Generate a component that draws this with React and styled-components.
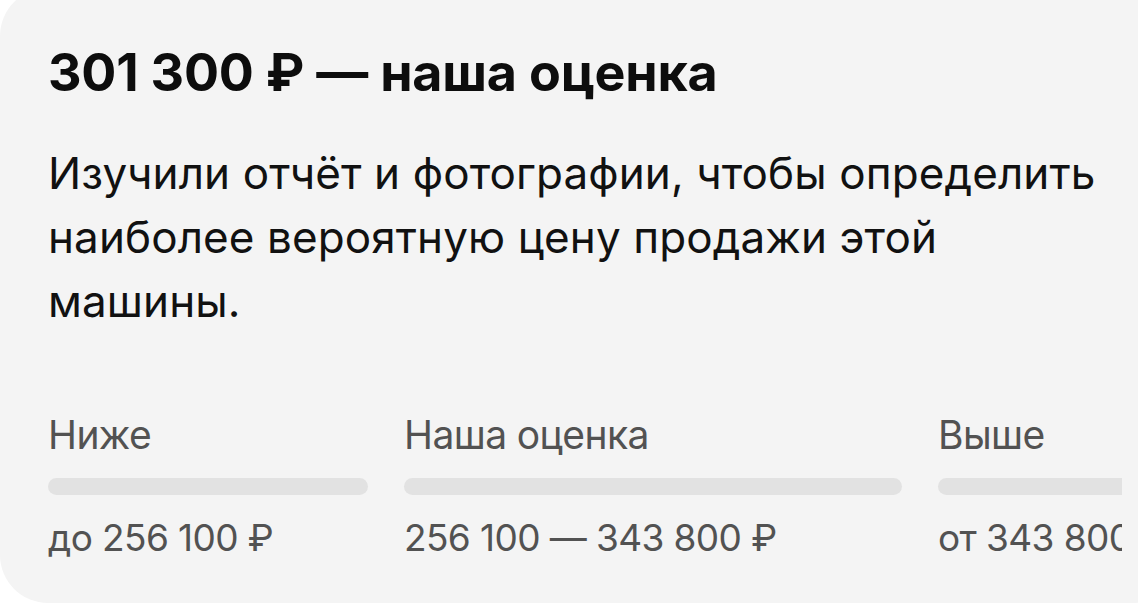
import * as React from 'react'
import styled, { createGlobalStyle } from 'styled-components'

const GlobalStyle = createGlobalStyle`
    html, body {
        margin: 0;
        padding: 0;
        background: #ffffff;
    }
    body {
        font-family: Inter, "Noto Sans", Roboto, sans-serif;
        -webkit-font-smoothing: antialiased;
    }
`

const Card = styled.section`
    margin-top: -12px;
    width: 1180px;
    height: 615px;
    box-sizing: border-box;
    background: #f4f4f4;
    border-radius: 48px;
    padding: 54px 0 0 48px;
    overflow: hidden;
`

const Title = styled.h2`
    margin: 0;
    font-size: 52px;
    line-height: 62px;
    font-weight: 700;
    color: #0d0d0d;
    letter-spacing: -0.2px;
    white-space: nowrap;
`

const Description = styled.p`
    margin: 37px 0 0;
    width: 1074px;
    font-size: 44px;
    line-height: 64px;
    font-weight: 400;
    color: #111111;
    letter-spacing: 0.1px;
`

// horizontal strip of price ranges, cut at the right edge like a scroller
const Scale = styled.div`
    margin-top: 78px;
    width: 1074px;
    overflow: hidden;
    display: flex;
    gap: 36px;
`

const Segment = styled.div`
    flex: 0 0 ${props => props.width}px;
    display: flex;
    flex-direction: column;
    color: #525252;
    white-space: nowrap;
`

const Label = styled.div`
    font-size: 39px;
    line-height: 48px;
    letter-spacing: -0.6px;
`

const Bar = styled.div`
    margin-top: 19px;
    height: 17px;
    border-radius: 9px;
    background: #e2e2e2;
`

const Value = styled.div`
    margin-top: 19px;
    font-size: 37px;
    line-height: 48px;
    letter-spacing: -0.6px;
`

const segments = [
    { label: 'Ниже', value: 'до 256 100 ₽', width: 320 },
    { label: 'Наша оценка', value: '256 100 — 343 800 ₽', width: 498 },
    { label: 'Выше', value: 'от 343 800 ₽', width: 320 },
]

export default function App() {
    return (
        <>
            <GlobalStyle />
            <Card>
                <Title>301 300 ₽ — наша оценка</Title>
                <Description>
                    Изучили отчёт и фотографии, чтобы определить наиболее вероятную цену продажи этой машины.
                </Description>
                <Scale>
                    {segments.map(s => (
                        <Segment key={s.label} width={s.width}>
                            <Label>{s.label}</Label>
                            <Bar />
                            <Value>{s.value}</Value>
                        </Segment>
                    ))}
                </Scale>
            </Card>
        </>
    )
}
